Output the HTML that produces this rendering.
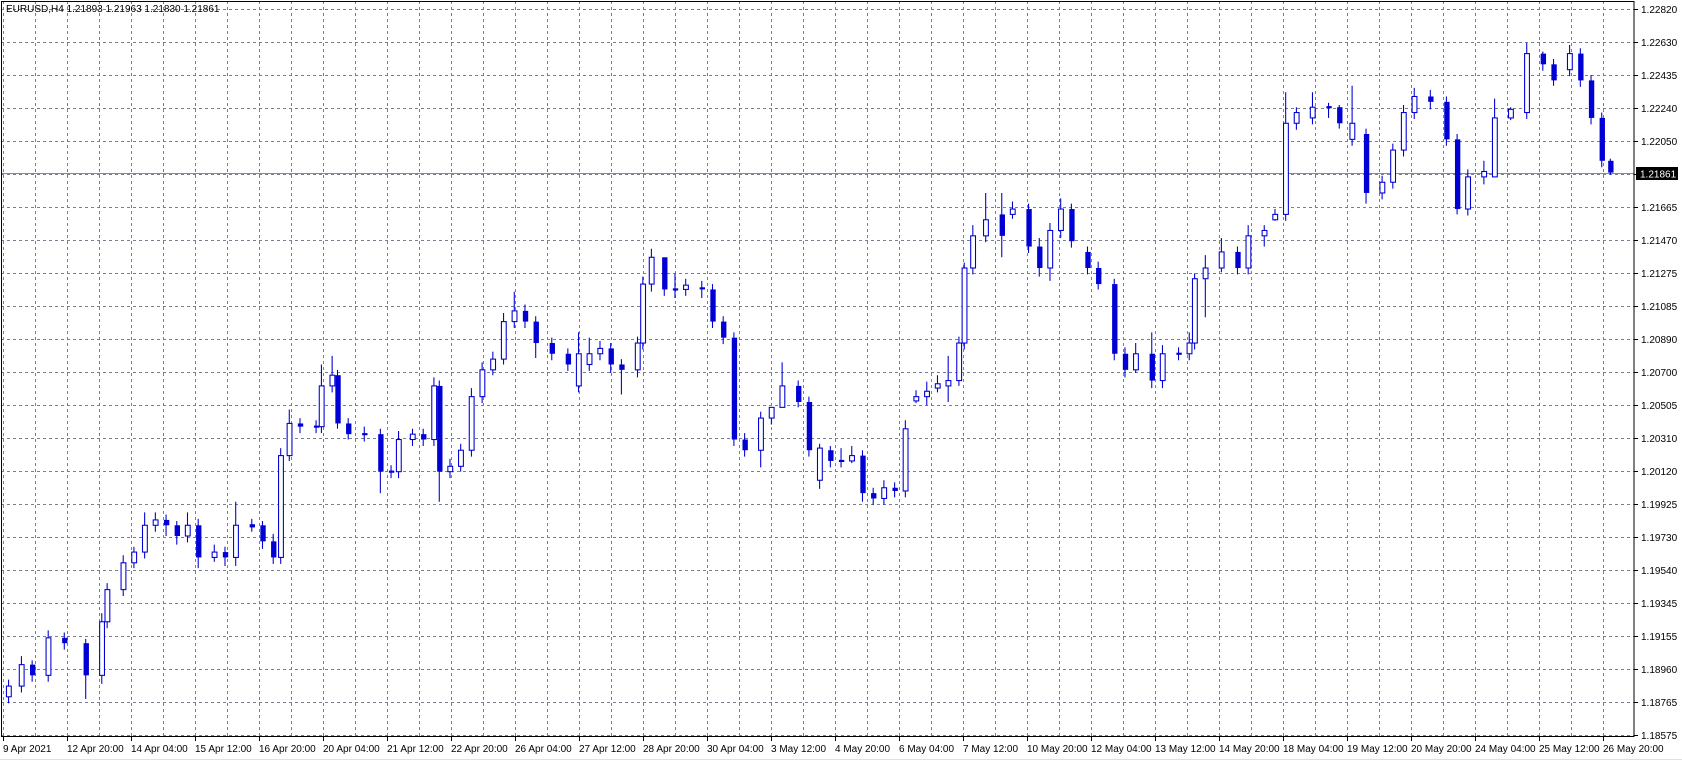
<!DOCTYPE html>
<html><head><meta charset="utf-8"><style>
html,body{margin:0;padding:0;background:#fff;}
body{width:1682px;height:761px;overflow:hidden;position:relative;}
svg{position:absolute;left:0;top:0;}
.u{fill:#fff;stroke:#0000d4;stroke-width:1}
.d{fill:#0000d4}
text{font-family:"Liberation Sans",sans-serif;font-size:10px;fill:#000}
</style></head><body>
<svg width="1682" height="761" xmlns="http://www.w3.org/2000/svg">
<path stroke="#75808f" stroke-dasharray="3,3" fill="none" d="M1 9.5H1634M1 42.5H1634M1 75.5H1634M1 108.5H1634M1 141.5H1634M1 174.5H1634M1 207.5H1634M1 240.5H1634M1 273.5H1634M1 306.5H1634M1 339.5H1634M1 372.5H1634M1 405.5H1634M1 438.5H1634M1 471.5H1634M1 504.5H1634M1 537.5H1634M1 570.5H1634M1 603.5H1634M1 636.5H1634M1 669.5H1634M1 702.5H1634M1 735.5H1634
M3.5 1V736M35.5 1V736M67.5 1V736M99.5 1V736M131.5 1V736M163.5 1V736M195.5 1V736M227.5 1V736M259.5 1V736M291.5 1V736M323.5 1V736M355.5 1V736M387.5 1V736M419.5 1V736M451.5 1V736M483.5 1V736M515.5 1V736M547.5 1V736M579.5 1V736M611.5 1V736M643.5 1V736M675.5 1V736M707.5 1V736M739.5 1V736M771.5 1V736M803.5 1V736M835.5 1V736M867.5 1V736M899.5 1V736M931.5 1V736M963.5 1V736M995.5 1V736M1027.5 1V736M1059.5 1V736M1091.5 1V736M1123.5 1V736M1155.5 1V736M1187.5 1V736M1219.5 1V736M1251.5 1V736M1283.5 1V736M1315.5 1V736M1347.5 1V736M1379.5 1V736M1411.5 1V736M1443.5 1V736M1475.5 1V736M1507.5 1V736M1539.5 1V736M1571.5 1V736M1603.5 1V736"/>
<line x1="1" x2="1634" y1="173.5" y2="173.5" stroke="#8a8a8a"/>
<g transform="scale(1.0714,1.072)">
<path stroke="#0000d4" stroke-width="1" fill="none" d="M8 634V656M20 612V646M30 616V636M45 588V636M60 590V606M80 596V652M95 572V638M100 544V586M115 518V556M125 510V530M135 478V521M145 478V496M155 480V500M165 486V508M175 478V506M185 484V530M200 508V524M210 510V528M220 468V528M235 484V496M245 486V512M255 498V526M262 418V526M270 382V430M280 390V404M295 392V404M300 340V404M310 332V366M315 345V400M325 390V410M340 398V412M355 400V460M365 434V446M372 402V446M385 400V416M395 400V416M405 352V416M410 355V468M420 428V446M430 414V440M440 362V426M450 338V376M460 328V350M470 292V340M480 272V306M490 284V306M500 295V334M515 315V336M530 325V346M540 310V366M550 315V346M560 318V336M570 320V348M580 335V368M595 314V352M600 258V326M608 232V272M620 244V276M630 255V278M640 260V276M655 262V278M665 265V306M675 295V321M685 310V416M695 404V426M710 384V436M720 384V396M730 338V366M745 355V380M755 370V426M765 414V456M775 416V436M785 418V436M795 416V432M805 420V468M815 455V471M825 448V471M835 450V464M845 392V464M855 364V376M865 356V378M875 350V366M885 332V375M895 314V360M900 245V326M908 210V256M920 180V226M935 180V240M945 188V204M960 190V236M970 222V258M980 208V262M990 185V222M1000 190V231M1015 230V256M1025 244V270M1040 260V336M1050 324V352M1060 320V348M1075 310V362M1085 322V362M1100 324V336M1110 310V336M1115 255V326M1125 238V296M1140 222V254M1155 230V256M1165 210V256M1180 210V230M1190 195V206M1200 86V206M1210 100V121M1225 86V116M1240 96V110M1250 98V120M1262 80V136M1275 120V190M1290 164V186M1300 134V176M1310 98V146M1320 82V111M1335 84V102M1350 90V136M1360 125V200M1370 158V201M1385 150V172M1395 92V116M1410 100V112M1425 40V111M1440 48V66M1450 55V80M1465 42V71M1475 45V81M1485 70V116M1495 105V156M1503 148V163"/>
<rect class="u" x="6" y="640" width="4.5" height="10"/>
<rect class="u" x="18" y="620" width="4.5" height="20"/>
<rect class="d" x="28" y="620" width="5" height="10"/>
<rect class="u" x="43" y="595" width="4.5" height="35"/>
<rect class="d" x="58" y="595" width="5" height="5"/>
<rect class="d" x="78" y="600" width="5" height="30"/>
<rect class="u" x="93" y="580" width="4.5" height="50"/>
<rect class="u" x="98" y="550" width="4.5" height="30"/>
<rect class="u" x="113" y="525" width="4.5" height="25"/>
<rect class="u" x="123" y="515" width="4.5" height="10"/>
<rect class="u" x="133" y="490" width="4.5" height="25"/>
<rect class="u" x="143" y="485" width="4.5" height="5"/>
<rect class="d" x="153" y="485" width="5" height="5"/>
<rect class="d" x="163" y="490" width="5" height="10"/>
<rect class="u" x="173" y="490" width="4.5" height="10"/>
<rect class="d" x="183" y="490" width="5" height="30"/>
<rect class="u" x="198" y="515" width="4.5" height="5"/>
<rect class="d" x="208" y="515" width="5" height="5"/>
<rect class="u" x="218" y="490" width="4.5" height="30"/>
<rect class="d" x="233" y="489" width="5" height="3"/>
<rect class="d" x="243" y="490" width="5" height="15"/>
<rect class="d" x="253" y="505" width="5" height="15"/>
<rect class="u" x="260" y="425" width="4.5" height="95"/>
<rect class="u" x="268" y="395" width="4.5" height="30"/>
<rect class="d" x="278" y="395" width="5" height="3"/>
<rect class="d" x="293" y="397" width="5" height="2"/>
<rect class="u" x="298" y="360" width="4.5" height="38"/>
<rect class="u" x="308" y="350" width="4.5" height="10"/>
<rect class="d" x="313" y="350" width="5" height="45"/>
<rect class="d" x="323" y="395" width="5" height="10"/>
<rect class="d" x="338" y="404" width="5" height="2"/>
<rect class="d" x="353" y="405" width="5" height="35"/>
<rect class="d" x="363" y="439" width="5" height="2"/>
<rect class="u" x="370" y="410" width="4.5" height="30"/>
<rect class="u" x="383" y="405" width="4.5" height="5"/>
<rect class="d" x="393" y="405" width="5" height="5"/>
<rect class="u" x="403" y="360" width="4.5" height="50"/>
<rect class="d" x="408" y="360" width="5" height="80"/>
<rect class="u" x="418" y="435" width="4.5" height="5"/>
<rect class="u" x="428" y="420" width="4.5" height="15"/>
<rect class="u" x="438" y="370" width="4.5" height="50"/>
<rect class="u" x="448" y="345" width="4.5" height="25"/>
<rect class="u" x="458" y="335" width="4.5" height="10"/>
<rect class="u" x="468" y="300" width="4.5" height="35"/>
<rect class="u" x="478" y="290" width="4.5" height="10"/>
<rect class="d" x="488" y="290" width="5" height="10"/>
<rect class="d" x="498" y="300" width="5" height="20"/>
<rect class="d" x="513" y="320" width="5" height="10"/>
<rect class="d" x="528" y="330" width="5" height="10"/>
<rect class="u" x="538" y="330" width="4.5" height="30"/>
<rect class="u" x="548" y="330" width="4.5" height="10"/>
<rect class="u" x="558" y="325" width="4.5" height="5"/>
<rect class="d" x="568" y="325" width="5" height="15"/>
<rect class="d" x="578" y="340" width="5" height="5"/>
<rect class="u" x="593" y="320" width="4.5" height="25"/>
<rect class="u" x="598" y="265" width="4.5" height="55"/>
<rect class="u" x="606" y="240" width="4.5" height="25"/>
<rect class="d" x="618" y="240" width="5" height="30"/>
<rect class="d" x="628" y="269" width="5" height="2"/>
<rect class="u" x="638" y="266" width="4.5" height="4"/>
<rect class="d" x="653" y="268" width="5" height="2"/>
<rect class="d" x="663" y="270" width="5" height="30"/>
<rect class="d" x="673" y="300" width="5" height="15"/>
<rect class="d" x="683" y="315" width="5" height="95"/>
<rect class="d" x="693" y="410" width="5" height="10"/>
<rect class="u" x="708" y="390" width="4.5" height="30"/>
<rect class="u" x="718" y="380" width="4.5" height="10"/>
<rect class="u" x="728" y="360" width="4.5" height="20"/>
<rect class="d" x="743" y="360" width="5" height="15"/>
<rect class="d" x="753" y="375" width="5" height="45"/>
<rect class="u" x="763" y="418" width="4.5" height="30"/>
<rect class="d" x="773" y="420" width="5" height="10"/>
<rect class="d" x="783" y="429" width="5" height="2"/>
<rect class="u" x="793" y="425" width="4.5" height="5"/>
<rect class="d" x="803" y="425" width="5" height="35"/>
<rect class="d" x="813" y="460" width="5" height="5"/>
<rect class="u" x="823" y="455" width="4.5" height="10"/>
<rect class="d" x="833" y="455" width="5" height="3"/>
<rect class="u" x="843" y="400" width="4.5" height="58"/>
<rect class="u" x="853" y="370" width="4.5" height="4"/>
<rect class="u" x="863" y="365" width="4.5" height="5"/>
<rect class="u" x="873" y="358" width="4.5" height="4"/>
<rect class="u" x="883" y="355" width="4.5" height="5"/>
<rect class="u" x="893" y="320" width="4.5" height="35"/>
<rect class="u" x="898" y="250" width="4.5" height="70"/>
<rect class="u" x="906" y="220" width="4.5" height="30"/>
<rect class="u" x="918" y="205" width="4.5" height="15"/>
<rect class="d" x="933" y="200" width="5" height="20"/>
<rect class="u" x="943" y="195" width="4.5" height="5"/>
<rect class="d" x="958" y="195" width="5" height="35"/>
<rect class="d" x="968" y="230" width="5" height="20"/>
<rect class="u" x="978" y="215" width="4.5" height="35"/>
<rect class="u" x="988" y="195" width="4.5" height="20"/>
<rect class="d" x="998" y="195" width="5" height="30"/>
<rect class="d" x="1013" y="235" width="5" height="15"/>
<rect class="d" x="1023" y="250" width="5" height="15"/>
<rect class="d" x="1038" y="265" width="5" height="65"/>
<rect class="d" x="1048" y="330" width="5" height="15"/>
<rect class="u" x="1058" y="330" width="4.5" height="15"/>
<rect class="d" x="1073" y="330" width="5" height="25"/>
<rect class="u" x="1083" y="330" width="4.5" height="25"/>
<rect class="d" x="1098" y="329" width="5" height="2"/>
<rect class="u" x="1108" y="320" width="4.5" height="10"/>
<rect class="u" x="1113" y="260" width="4.5" height="60"/>
<rect class="u" x="1123" y="250" width="4.5" height="10"/>
<rect class="u" x="1138" y="235" width="4.5" height="15"/>
<rect class="d" x="1153" y="235" width="5" height="15"/>
<rect class="u" x="1163" y="220" width="4.5" height="30"/>
<rect class="u" x="1178" y="215" width="4.5" height="5"/>
<rect class="u" x="1188" y="200" width="4.5" height="5"/>
<rect class="u" x="1198" y="115" width="4.5" height="85"/>
<rect class="u" x="1208" y="105" width="4.5" height="10"/>
<rect class="u" x="1223" y="100" width="4.5" height="10"/>
<rect class="d" x="1238" y="99" width="5" height="2"/>
<rect class="d" x="1248" y="100" width="5" height="15"/>
<rect class="u" x="1260" y="115" width="4.5" height="15"/>
<rect class="d" x="1273" y="125" width="5" height="55"/>
<rect class="u" x="1288" y="170" width="4.5" height="10"/>
<rect class="u" x="1298" y="140" width="4.5" height="30"/>
<rect class="u" x="1308" y="105" width="4.5" height="35"/>
<rect class="u" x="1318" y="90" width="4.5" height="15"/>
<rect class="d" x="1333" y="90" width="5" height="5"/>
<rect class="d" x="1348" y="95" width="5" height="35"/>
<rect class="d" x="1358" y="130" width="5" height="65"/>
<rect class="u" x="1368" y="165" width="4.5" height="30"/>
<rect class="u" x="1383" y="160" width="4.5" height="5"/>
<rect class="u" x="1393" y="110" width="4.5" height="55"/>
<rect class="u" x="1408" y="102" width="4.5" height="8"/>
<rect class="u" x="1423" y="50" width="4.5" height="55"/>
<rect class="d" x="1438" y="50" width="5" height="10"/>
<rect class="d" x="1448" y="60" width="5" height="15"/>
<rect class="u" x="1463" y="50" width="4.5" height="15"/>
<rect class="d" x="1473" y="50" width="5" height="25"/>
<rect class="d" x="1483" y="75" width="5" height="35"/>
<rect class="d" x="1493" y="110" width="5" height="40"/>
<rect class="d" x="1501" y="150" width="5" height="11"/>
</g>
<rect x="1.5" y="1.5" width="1632.5" height="735" fill="none" stroke="#000"/>
<path stroke="#000" d="M1634 9.5h4M1634 42.5h4M1634 75.5h4M1634 108.5h4M1634 141.5h4M1634 174.5h4M1634 207.5h4M1634 240.5h4M1634 273.5h4M1634 306.5h4M1634 339.5h4M1634 372.5h4M1634 405.5h4M1634 438.5h4M1634 471.5h4M1634 504.5h4M1634 537.5h4M1634 570.5h4M1634 603.5h4M1634 636.5h4M1634 669.5h4M1634 702.5h4M1634 735.5h4
M3.5 736v5M67.5 736v5M131.5 736v5M195.5 736v5M259.5 736v5M323.5 736v5M387.5 736v5M451.5 736v5M515.5 736v5M579.5 736v5M643.5 736v5M707.5 736v5M771.5 736v5M835.5 736v5M899.5 736v5M963.5 736v5M1027.5 736v5M1091.5 736v5M1155.5 736v5M1219.5 736v5M1283.5 736v5M1347.5 736v5M1411.5 736v5M1475.5 736v5M1539.5 736v5M1603.5 736v5"/>
<text x="1641" y="13">1.22820</text>
<text x="1641" y="46">1.22630</text>
<text x="1641" y="79">1.22435</text>
<text x="1641" y="112">1.22240</text>
<text x="1641" y="145">1.22050</text>
<text x="1641" y="211">1.21665</text>
<text x="1641" y="244">1.21470</text>
<text x="1641" y="277">1.21275</text>
<text x="1641" y="310">1.21085</text>
<text x="1641" y="343">1.20890</text>
<text x="1641" y="376">1.20700</text>
<text x="1641" y="409">1.20505</text>
<text x="1641" y="442">1.20310</text>
<text x="1641" y="475">1.20120</text>
<text x="1641" y="508">1.19925</text>
<text x="1641" y="541">1.19730</text>
<text x="1641" y="574">1.19540</text>
<text x="1641" y="607">1.19345</text>
<text x="1641" y="640">1.19155</text>
<text x="1641" y="673">1.18960</text>
<text x="1641" y="706">1.18765</text>
<text x="1641" y="739">1.18575</text>
<rect x="1636" y="167" width="42" height="13" fill="#000"/>
<text x="1640" y="177.5" style="fill:#fff">1.21861</text>
<text x="3" y="752">9 Apr 2021</text>
<text x="67" y="752">12 Apr 20:00</text>
<text x="131" y="752">14 Apr 04:00</text>
<text x="195" y="752">15 Apr 12:00</text>
<text x="259" y="752">16 Apr 20:00</text>
<text x="323" y="752">20 Apr 04:00</text>
<text x="387" y="752">21 Apr 12:00</text>
<text x="451" y="752">22 Apr 20:00</text>
<text x="515" y="752">26 Apr 04:00</text>
<text x="579" y="752">27 Apr 12:00</text>
<text x="643" y="752">28 Apr 20:00</text>
<text x="707" y="752">30 Apr 04:00</text>
<text x="771" y="752">3 May 12:00</text>
<text x="835" y="752">4 May 20:00</text>
<text x="899" y="752">6 May 04:00</text>
<text x="963" y="752">7 May 12:00</text>
<text x="1027" y="752">10 May 20:00</text>
<text x="1091" y="752">12 May 04:00</text>
<text x="1155" y="752">13 May 12:00</text>
<text x="1219" y="752">14 May 20:00</text>
<text x="1283" y="752">18 May 04:00</text>
<text x="1347" y="752">19 May 12:00</text>
<text x="1411" y="752">20 May 20:00</text>
<text x="1475" y="752">24 May 04:00</text>
<text x="1539" y="752">25 May 12:00</text>
<text x="1603" y="752">26 May 20:00</text>
<text x="6" y="12">EURUSD,H4  1.21893 1.21963 1.21830 1.21861</text>
<line x1="0" x2="1682" y1="759.5" y2="759.5" stroke="#e0e0e0"/>
</svg>
</body></html>
